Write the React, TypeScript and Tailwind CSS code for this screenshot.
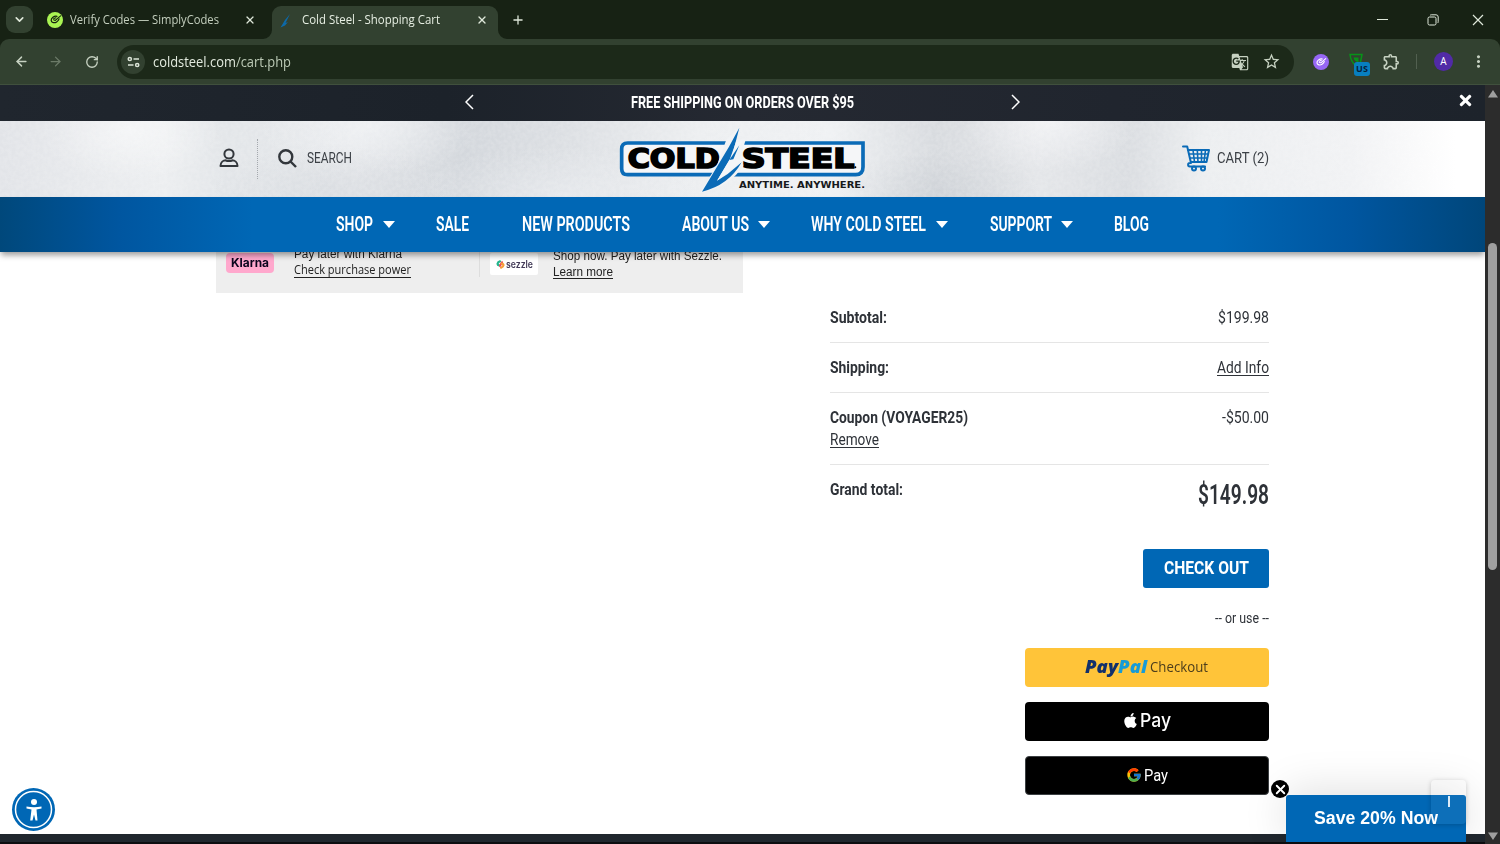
import React, { useLayoutEffect, useRef, useState } from 'react';
import { ArrowLeft, ArrowRight, ChevronDown, Minus, Plus, RotateCw, X } from 'lucide-react';
import { FaApple, FaTimes } from 'react-icons/fa';
import { FcGoogle } from 'react-icons/fc';
import { MdGTranslate, MdMoreVert, MdOutlineExtension, MdStarBorder } from 'react-icons/md';

interface FitProps {
  w: number;
  className?: string;
  children: React.ReactNode;
}

// Single line label condensed (or widened) to a fixed width
const Fit: React.FC<FitProps> = ({ w, className = '', children }) => {
  const ref = useRef<HTMLSpanElement>(null);
  const [scale, setScale] = useState(1);

  useLayoutEffect(() => {
    if (ref.current && ref.current.offsetWidth) {
      setScale(w / ref.current.getBoundingClientRect().width);
    }
  }, [w]);

  return (
    <span className={`block shrink-0 ${className}`} style={{ width: w }}>
      <span ref={ref} className="inline-block origin-left whitespace-nowrap" style={{ transform: `scaleX(${scale})` }}>
        {children}
      </span>
    </span>
  );
};

const SwirlMark = ({ className }: { className: string }) => (
  <svg viewBox="0 0 16 16" className={className} fill="none" stroke="currentColor" strokeLinecap="round" strokeLinejoin="round">
    <path d="M9.500 4.600C6.500 4 3.200 6.400 3.400 9c.2 2.500 3.600 3 5.800 1.600 1.500-.9 2.300-2 2.600-3.200" strokeWidth="1.300" />
    <path d="M6 8.300 7.800 9 13.400 4.200M6.200 7l2.200-.9" strokeWidth="1.200" />
  </svg>
);

const TabStrip = () => (
  <div className="flex h-[39px] shrink-0 items-center bg-[#172214] text-[#dfe8da]">
    <button className="ml-[6px] flex h-[27px] w-[27px] items-center justify-center rounded-[9px] bg-[#324130]">
      <ChevronDown size={13} strokeWidth={3} />
    </button>
    <div className="ml-[14px] flex w-[225px] items-center">
      <span className="flex h-4 w-4 items-center justify-center rounded-full bg-[#a9f453] text-[#142010]">
        <SwirlMark className="h-[15px] w-[15px]" />
      </span>
      <Fit w={149} className="ml-[7px] text-[12px] text-[#c3cebd]">Verify Codes — SimplyCodes</Fit>
      <X size={12} strokeWidth={2.400} className="ml-[25px]" />
    </div>
    <div className="relative flex h-[33px] w-[226px] items-center self-end rounded-t-[9px] bg-[#324130] pb-[5px]">
      <svg viewBox="0 0 9 9" className="absolute bottom-0 -left-[9px] h-[9px] w-[9px]"><path d="M9 0v9H0a9 9 0 0 0 9-9z" fill="#324130" /></svg>
      <svg viewBox="0 0 9 9" className="absolute -right-[9px] bottom-0 h-[9px] w-[9px]"><path d="M0 0v9h9a9 9 0 0 1-9-9z" fill="#324130" /></svg>
      <svg viewBox="0 0 12 14" className="mt-[2px] ml-[8px] h-[14px] w-[12px]">
        <path d="M10 0 5 6 0.500 13.500 5 11.500 8 8 5.500 9z" fill="#0d69a8" />
      </svg>
      <Fit w={138} className="ml-[10px] text-[12px] text-[#e6eee2]">Cold Steel - Shopping Cart</Fit>
      <X size={12} strokeWidth={2.700} className="ml-[36px]" />
    </div>
    <Plus size={14} strokeWidth={2.200} className="ml-[13px]" />
    <div className="ml-auto flex items-center">
      <svg viewBox="0 0 11 2" className="mr-[39px] h-[2px] w-[11px]"><path d="M0 .5h11" stroke="currentColor" /></svg>
      <svg viewBox="0 0 12 12" className="mr-[33px] h-[12px] w-[12px]" fill="none" stroke="currentColor">
        <rect x="1" y="3" width="8" height="8" rx="1.500" />
        <path d="M3 1.500C3.300 1 3.800.8 4.300.8H9a2.200 2.200 0 0 1 2.200 2.200v4.700c0 .6-.2 1-.7 1.300" />
      </svg>
      <svg viewBox="0 0 12 12" className="mr-[16px] h-[12px] w-[12px]" stroke="currentColor" strokeWidth="1.200">
        <path d="M1 1l10 10M11 1 1 11" />
      </svg>
    </div>
  </div>
);

const Toolbar = () => (
  <div className="bg-[#172214]">
    <div className="flex h-[46px] items-center rounded-t-[9px] border-b border-[#40503d] bg-[#324130] text-[#c6d1c1]">
      <ArrowLeft size={15} strokeWidth={2.300} className="ml-[14px]" />
      <ArrowRight size={15} strokeWidth={2} className="ml-[19px] text-[#6c7b68]" />
      <RotateCw size={14} strokeWidth={2.300} className="ml-[22px]" />
      <div className="ml-[18px] flex h-[34px] w-[1177px] items-center rounded-full bg-[#1c2919]">
        <span className="ml-[4px] flex h-[24px] w-[24px] items-center justify-center rounded-full bg-[#324130] text-[#dce5d8]">
          <svg viewBox="0 0 13 12" className="h-[12px] w-[13px]" fill="none" stroke="currentColor" strokeWidth="1.500">
            <circle cx="2.800" cy="3" r="1.600" />
            <path d="M6.500 3H12M1 9h5.500" />
            <circle cx="10.200" cy="9" r="1.600" />
          </svg>
        </span>
        <Fit w={138} className="ml-[8px] text-[14px] text-[#e3ebdf]">
          coldsteel.com<span className="text-[#bccab6]">/cart.php</span>
        </Fit>
        <MdGTranslate size={18} className="ml-auto" />
        <MdStarBorder size={19} className="mr-[13px] ml-[13px]" />
      </div>
      <span className="ml-[19px] flex h-4 w-4 items-center justify-center rounded-full bg-[#9767f5] text-white">
        <SwirlMark className="h-[14px] w-[14px]" />
      </span>
      <span className="relative ml-[20px] block h-[24px] w-[22px]">
        <svg viewBox="0 0 14 14" className="mt-[3px] h-[14px] w-[14px]" fill="none" stroke="#069418" strokeWidth="1.500">
          <path d="M1 1.500h12L11.500 9 7 13C3.500 10 1.500 6 1 1.500z" />
          <path d="M4.500 4.500h5v5c-2.500-1-4.500-2-5-5z" fill="#069418" stroke="none" />
        </svg>
        <span className="absolute top-[12px] left-[5px] flex h-[14px] w-[16px] items-center justify-center rounded-[3px] bg-[#087fc0] text-[9px] font-bold text-[#06213a]">US</span>
      </span>
      <MdOutlineExtension size={19} className="ml-[11px]" />
      <span className="ml-[15px] h-[15px] w-px bg-[#526050]" />
      <span className="ml-[17px] flex h-[19px] w-[19px] items-center justify-center rounded-full bg-[#512aa7] text-[10px] text-white">A</span>
      <MdMoreVert size={19} className="ml-[16px]" />
    </div>
  </div>
);

const Logo = () => (
  <svg viewBox="55 125 750 198" className="h-[66px] w-[250px]">
    <path d="M84 173H790V245Q790 268 768 268H84Q66 268 66 250V191Q66 173 84 173Z" fill="#f5f6f8" stroke="#0b6bb7" strokeWidth="11" />
    <g fontFamily="DejaVu Sans" fontWeight="700" fontSize="78" fill="#000" stroke="#000" strokeWidth="5">
      <text x="84" y="248" textLength="276" lengthAdjust="spacingAndGlyphs">COLD</text>
      <text x="426" y="248" textLength="338" lengthAdjust="spacingAndGlyphs">STEEL</text>
    </g>
    <circle cx="767" cy="246" r="3" />
    <path d="M380 163 418 126 410 163 438 163 416 238 432 238Q392 306 300 323L352 240Z" fill="#f1f3f5" />
    <path d="M419 127 388 184 307 319Q386 301 426 231L384 266 352 286 397 212 409 166Z" fill="#0b6bb7" />
    <path d="M352 286 391 220 409 170 427 168 404 222 428 222 382 264Z" fill="#f4f6f8" />
    <path d="M419 180 389 224 401 222Z" fill="#0b6bb7" />
    <text x="418" y="309" fontFamily="DejaVu Sans" fontWeight="700" fontSize="24" fill="#17191c" textLength="378" lengthAdjust="spacingAndGlyphs">ANYTIME. ANYWHERE.</text>
  </svg>
);

const CartIcon = () => (
  <svg viewBox="0 0 28 27" className="h-[27px] w-[28px]" fill="none" stroke="#0b6bb7" strokeLinecap="round" strokeLinejoin="round">
    <path d="M1 1.500h4.200L9 18H7.800a1.700 1.700 0 0 0 0 3.400H23" strokeWidth="2" />
    <path d="M6 5h21l-2.500 12H9" strokeWidth="2" />
    <path d="M7 9h19M8 13h17M11 5l1.500 12M15.300 5l.7 12M19.500 5v12M23.500 5l-1.500 12" strokeWidth="1.600" />
    <circle cx="12" cy="23.500" r="2" strokeWidth="2" />
    <circle cx="21" cy="23.500" r="2" strokeWidth="2" />
  </svg>
);

const Announcement = () => (
  <div className="flex h-[36px] shrink-0 items-center bg-[linear-gradient(90deg,#20262e,#1c222a_30%,#252932_50%,#20252e_75%,#1d232b)] text-white">
    <svg viewBox="0 0 9 16" className="-mt-[3px] ml-[465px] h-[16px] w-[9px]" fill="none" stroke="#fff" strokeWidth="1.500"><path d="M8 1 1 8l7 7" /></svg>
    <Fit w={223} className="ml-[157px] font-[Roboto] text-[17px] font-bold">FREE SHIPPING ON ORDERS OVER $95</Fit>
    <svg viewBox="0 0 9 16" className="-mt-[3px] ml-[157px] h-[16px] w-[9px]" fill="none" stroke="#fff" strokeWidth="1.500"><path d="m1 1 7 7-7 7" /></svg>
    <FaTimes size={17} className="-mt-[5px] mr-[11px] ml-auto" />
  </div>
);

const Masthead = () => (
  <div className="relative isolate flex h-[76px] shrink-0 items-center bg-[linear-gradient(90deg,#e2e4e8_0%,#eceef0_11%,#e3e6e9_15%,#e5e7ea_24%,#d3d7dc_31%,#dcdfe3_38%,#eceef0_47%,#eff1f3_56%,#d8dbdf_63%,#e4e6e9_70%,#dadde1_76%,#eceef0_81%,#f1f2f4_91%,#fff_98%)] font-[Roboto] text-[#3c4046]">
    <div className="absolute inset-0 -z-10 bg-[radial-gradient(ellipse_90px_50px_at_130px_10px,rgba(255,255,255,.5),transparent),radial-gradient(ellipse_120px_45px_at_330px_70px,rgba(200,205,212,.35),transparent),radial-gradient(ellipse_110px_50px_at_370px_5px,rgba(245,247,249,.6),transparent),radial-gradient(ellipse_150px_50px_at_560px_75px,rgba(240,242,245,.5),transparent),radial-gradient(ellipse_100px_40px_at_940px_70px,rgba(195,200,206,.4),transparent),radial-gradient(ellipse_90px_50px_at_1050px_0px,rgba(250,250,252,.6),transparent)]" />
    <svg className="absolute inset-0 -z-10 h-full w-full opacity-[0.13]">
      <filter id="grain">
        <feTurbulence type="fractalNoise" baseFrequency="0.25" numOctaves="3" seed="4" />
        <feColorMatrix values="0 0 0 0 1  0 0 0 0 1  0 0 0 0 1  2.500 0 0 0 -0.8" />
      </filter>
      <rect width="100%" height="100%" filter="url(#grain)" />
    </svg>
    <svg viewBox="0 0 20 20" className="-mt-[2px] ml-[219px] h-[20px] w-[20px]" fill="none" stroke="#33373c" strokeWidth="2">
      <circle cx="10" cy="6" r="4.600" />
      <path d="M1.500 18c0-4 3-5.700 5.300-5.700 1.500 1 4.900 1 6.400 0 2.300 0 5.300 1.700 5.300 5.700z" strokeLinejoin="round" />
    </svg>
    <span className="ml-[18px] h-[40px] border-l border-dotted border-[#a4a8ad]" />
    <svg viewBox="0 0 19 19" className="-mt-[2px] ml-[20px] h-[19px] w-[19px]" fill="none" stroke="#33373c" strokeWidth="2.400">
      <circle cx="7.800" cy="7.800" r="6.500" />
      <path d="m12.500 12.500 5.500 5.500" />
    </svg>
    <Fit w={45} className="-mt-px ml-[10px] text-[15px]">SEARCH</Fit>
    <div className="mt-[2px] ml-[266px]"><Logo /></div>
    <div className="-mt-[2px] ml-[314px]"><CartIcon /></div>
    <Fit w={52} className="-mt-px ml-[7px] text-[15px]">CART (2)</Fit>
  </div>
);

const menu = [
  { label: 'SHOP', w: 37, gap: 41, caret: true },
  { label: 'SALE', w: 33, gap: 53 },
  { label: 'NEW PRODUCTS', w: 108, gap: 52 },
  { label: 'ABOUT US', w: 67, gap: 41, caret: true },
  { label: 'WHY COLD STEEL', w: 115, gap: 42, caret: true },
  { label: 'SUPPORT', w: 62, gap: 41, caret: true },
  { label: 'BLOG', w: 35, gap: 0 },
];

const MainMenu = () => (
  <nav className="relative z-10 flex h-[55px] shrink-0 items-center bg-[linear-gradient(90deg,#00487b_0%,#0056a0_8%,#0067b5_17%,#0067b5_82%,#0056a0_91%,#00467a_100%)] pl-[336px] text-white shadow-[0_4px_6px_-1px_rgba(0,0,0,0.4)]">
    {menu.map((item) => (
      <div key={item.label} className="flex items-center" style={{ marginRight: item.gap }}>
        <Fit w={item.w} className="-mt-[2px] font-[Roboto] text-[20px] font-semibold">{item.label}</Fit>
        {item.caret && (
          <svg viewBox="0 0 12 7" className="ml-[9.5px] h-[7px] w-[12px]"><path d="M0 0h12L6 7z" fill="#fff" /></svg>
        )}
      </div>
    ))}
  </nav>
);

const Financing = () => (
  <div className="-mt-[11px] ml-[216px] flex h-[52px] w-[527px] items-start bg-[#eee] text-[12px] leading-4 text-[#222]">
    <div className="mt-[12px] ml-[10px] flex h-[20px] w-[48px] items-center justify-center rounded-[4px] bg-[#ffa8cd]">
      <Fit w={38} className="font-[Inter] text-[12px] font-bold text-[#0b051d]">Klarna</Fit>
    </div>
    <div className="mt-[5px] ml-[20px] font-['Liberation_Sans']">
      <Fit w={108}>Pay later with Klarna</Fit>
      <Fit w={117}><span className="font-['Open_Sans'] underline underline-offset-[3px]">Check purchase power</span></Fit>
    </div>
    <span className="ml-[68px] h-[36px] w-px bg-[#ddd]" />
    <div className="mt-[12px] ml-[10px] flex h-[22px] w-[48px] items-center rounded-[2px] bg-white pl-[6px]">
      <svg viewBox="0 0 9 9" className="h-[9px] w-[9px]" fill="none" strokeWidth="2.200" strokeLinecap="round">
        <path d="M4 1.300C1 2.500.8 5 3.300 5.500" stroke="#23b68e" />
        <path d="m4 5.800 2-3.500" stroke="#e9485d" />
        <path d="M5.800 3.700C8.300 4 8 6.500 5 7.700" stroke="#f59d38" />
      </svg>
      <Fit w={27} className="ml-px font-[Inter] text-[10px] font-semibold text-[#423a57]">sezzle</Fit>
    </div>
    <div className="mt-[7px] ml-[15px] font-['Liberation_Sans']">
      <Fit w={169}>Shop now. Pay later with Sezzle.</Fit>
      <Fit w={60}><span className="underline underline-offset-2">Learn more</span></Fit>
    </div>
  </div>
);

const Summary = () => (
  <div className="ml-[830px] w-[439px] font-[Roboto] text-[16px] leading-[22px] text-[#2e3238]">
    <div className="flex h-[50px] justify-between border-b border-[#e5e5e5] pt-[14px]">
      <Fit w={57} className="font-bold">Subtotal:</Fit>
      <Fit w={51}>$199.98</Fit>
    </div>
    <div className="flex h-[50px] justify-between border-b border-[#e5e5e5] pt-[14px]">
      <Fit w={59} className="font-bold">Shipping:</Fit>
      <Fit w={52}><span className="underline underline-offset-2">Add Info</span></Fit>
    </div>
    <div className="flex h-[72px] justify-between border-b border-[#e5e5e5] pt-[14px]">
      <div>
        <Fit w={138} className="font-bold">Coupon (VOYAGER25)</Fit>
        <Fit w={49}><span className="underline underline-offset-2">Remove</span></Fit>
      </div>
      <Fit w={47}>-$50.00</Fit>
    </div>
    <div className="flex h-[84px] justify-between pt-[14px]">
      <Fit w={73} className="font-bold">Grand total:</Fit>
      <Fit w={71} className="mt-[5px] text-[28px] font-semibold">$149.98</Fit>
    </div>
    <div className="flex flex-col items-end">
      <button className="flex h-[39px] w-[126px] items-center justify-center rounded-[3px] bg-[#0067b5] pb-[2px] text-white">
        <Fit w={85} className="text-[19px] font-bold">CHECK OUT</Fit>
      </button>
      <Fit w={54} className="mt-[19px] text-[14px]">-- or use --</Fit>
      <button className="mt-[19px] flex h-[39px] w-[244px] items-center justify-center rounded-[4px] bg-[#ffc439] pr-[2px] pb-[3px]">
        <Fit w={62} className="font-['Open_Sans'] text-[18px] font-extrabold italic">
          <span className="text-[#12306b]">Pay</span><span className="text-[#179bd7]">Pal</span>
        </Fit>
        <Fit w={58} className="ml-[4px] pt-[2px] font-['Open_Sans'] text-[14px] font-medium text-[#4c3d1c]">Checkout</Fit>
      </button>
      <button className="mt-[15px] flex h-[39px] w-[244px] items-center justify-center rounded-[4px] bg-black pr-px text-white">
        <FaApple size={17} className="-mt-[3px] mr-px" />
        <Fit w={31} className="-mt-px font-[Inter] text-[19px] font-medium">Pay</Fit>
      </button>
      <button className="mt-[15px] flex h-[39px] w-[244px] items-center justify-center rounded-[4px] border border-[#3c4043] bg-black pr-px text-white">
        <FcGoogle size={16} className="-mt-px" />
        <Fit w={24} className="ml-[2px] font-[Roboto] text-[16px]">Pay</Fit>
      </button>
    </div>
  </div>
);

const Accessibility = () => (
  <button className="absolute top-[703px] left-[12px] z-20 flex h-[43px] w-[43px] items-center justify-center rounded-full bg-[#0067b5]">
    <svg viewBox="0 0 43 43" className="h-[43px] w-[43px]" fill="#fff">
      <circle cx="21.500" cy="21.500" r="18" fill="none" stroke="#fff" strokeWidth="1.500" />
      <circle cx="22" cy="14" r="3" />
      <path d="M14.500 18.500q7.500 1.400 15 0v2l-5 1 1 11h-2l-1.500-6-1.500 6h-2.300l1.300-11-5-1z" />
    </svg>
  </button>
);

const Promo = () => (
  <div className="absolute right-[19px] bottom-[2px] z-20 h-[47px] w-[180px]">
    <div className="flex h-full items-center justify-center rounded-t-[3px] bg-[#0067b5] font-['Liberation_Sans'] text-[18px] font-bold text-white shadow-[0_-4px_44px_rgba(0,0,0,0.13)]">
      <Fit w={124}>Save 20% Now</Fit>
    </div>
    <button className="absolute -top-[15px] -left-[15px] flex h-[18px] w-[18px] items-center justify-center rounded-full bg-black text-white">
      <X size={15} strokeWidth={3} />
    </button>
    <div className="absolute -top-[15px] right-0 flex h-[44px] w-[35px] justify-center rounded-[4px] bg-white/5 pt-[16px] shadow-[0_1px_5px_rgba(0,0,0,0.2)]">
      <span className="h-[11px] w-[2px] bg-[#dcebf7]" />
    </div>
  </div>
);

const Scrollbar = () => (
  <div className="flex w-[15px] flex-col items-center bg-[#2c2c2c]">
    <svg viewBox="0 0 10 8" className="mt-[5px] h-[8px] w-[10px]"><path d="M5 0 10 7.500H0z" fill="#9f9f9f" /></svg>
    <span className="mt-[145px] h-[327px] w-[9px] rounded-full bg-[#9f9f9f]" />
    <svg viewBox="0 0 10 8" className="mt-auto mb-[4px] h-[8px] w-[10px]"><path d="M0 .5h10L5 8z" fill="#9f9f9f" /></svg>
  </div>
);

export default function App() {
  return (
    <div className="flex h-[844px] w-[1500px] flex-col overflow-hidden bg-white font-['Open_Sans',sans-serif]">
      <TabStrip />
      <Toolbar />
      <div className="flex min-h-0 flex-1">
        <div className="relative flex w-[1485px] flex-col overflow-hidden">
          <Announcement />
          <Masthead />
          <MainMenu />
          <main className="min-h-0 flex-1 overflow-hidden">
            <Financing />
            <Summary />
          </main>
          <div className="h-[10px] shrink-0 border-b-2 border-[#0c0d10] bg-[#20272e]" />
          <Accessibility />
          <Promo />
        </div>
        <Scrollbar />
      </div>
    </div>
  );
}
